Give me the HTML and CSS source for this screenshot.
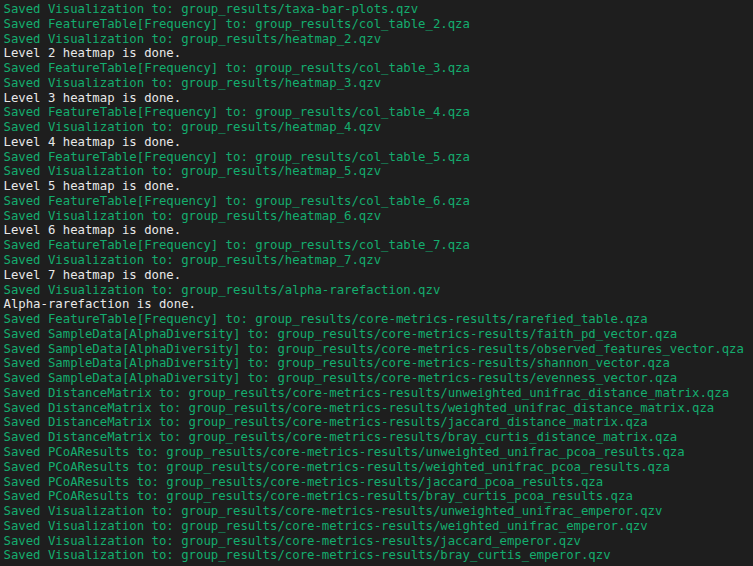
FILE: index.html
```html
<!DOCTYPE html>
<html>
<head>
<meta charset="utf-8">
<link rel="stylesheet" href="styles.css">
</head>
<body>
<div class="term">
<div class="g">Saved Visualization to: group_results/taxa-bar-plots.qzv</div>
<div class="g">Saved FeatureTable[Frequency] to: group_results/col_table_2.qza</div>
<div class="g">Saved Visualization to: group_results/heatmap_2.qzv</div>
<div class="w">Level 2 heatmap is done.</div>
<div class="g">Saved FeatureTable[Frequency] to: group_results/col_table_3.qza</div>
<div class="g">Saved Visualization to: group_results/heatmap_3.qzv</div>
<div class="w">Level 3 heatmap is done.</div>
<div class="g">Saved FeatureTable[Frequency] to: group_results/col_table_4.qza</div>
<div class="g">Saved Visualization to: group_results/heatmap_4.qzv</div>
<div class="w">Level 4 heatmap is done.</div>
<div class="g">Saved FeatureTable[Frequency] to: group_results/col_table_5.qza</div>
<div class="g">Saved Visualization to: group_results/heatmap_5.qzv</div>
<div class="w">Level 5 heatmap is done.</div>
<div class="g">Saved FeatureTable[Frequency] to: group_results/col_table_6.qza</div>
<div class="g">Saved Visualization to: group_results/heatmap_6.qzv</div>
<div class="w">Level 6 heatmap is done.</div>
<div class="g">Saved FeatureTable[Frequency] to: group_results/col_table_7.qza</div>
<div class="g">Saved Visualization to: group_results/heatmap_7.qzv</div>
<div class="w">Level 7 heatmap is done.</div>
<div class="g">Saved Visualization to: group_results/alpha-rarefaction.qzv</div>
<div class="w">Alpha-rarefaction is done.</div>
<div class="g">Saved FeatureTable[Frequency] to: group_results/core-metrics-results/rarefied_table.qza</div>
<div class="g">Saved SampleData[AlphaDiversity] to: group_results/core-metrics-results/faith_pd_vector.qza</div>
<div class="g">Saved SampleData[AlphaDiversity] to: group_results/core-metrics-results/observed_features_vector.qza</div>
<div class="g">Saved SampleData[AlphaDiversity] to: group_results/core-metrics-results/shannon_vector.qza</div>
<div class="g">Saved SampleData[AlphaDiversity] to: group_results/core-metrics-results/evenness_vector.qza</div>
<div class="g">Saved DistanceMatrix to: group_results/core-metrics-results/unweighted_unifrac_distance_matrix.qza</div>
<div class="g">Saved DistanceMatrix to: group_results/core-metrics-results/weighted_unifrac_distance_matrix.qza</div>
<div class="g">Saved DistanceMatrix to: group_results/core-metrics-results/jaccard_distance_matrix.qza</div>
<div class="g">Saved DistanceMatrix to: group_results/core-metrics-results/bray_curtis_distance_matrix.qza</div>
<div class="g">Saved PCoAResults to: group_results/core-metrics-results/unweighted_unifrac_pcoa_results.qza</div>
<div class="g">Saved PCoAResults to: group_results/core-metrics-results/weighted_unifrac_pcoa_results.qza</div>
<div class="g">Saved PCoAResults to: group_results/core-metrics-results/jaccard_pcoa_results.qza</div>
<div class="g">Saved PCoAResults to: group_results/core-metrics-results/bray_curtis_pcoa_results.qza</div>
<div class="g">Saved Visualization to: group_results/core-metrics-results/unweighted_unifrac_emperor.qzv</div>
<div class="g">Saved Visualization to: group_results/core-metrics-results/weighted_unifrac_emperor.qzv</div>
<div class="g">Saved Visualization to: group_results/core-metrics-results/jaccard_emperor.qzv</div>
<div class="g">Saved Visualization to: group_results/core-metrics-results/bray_curtis_emperor.qzv</div>
</div>
</body>
</html>
```
FILE: styles.css
```css
html, body {
  margin: 0;
  padding: 0;
  background: #1e1e1e;
  height: 100%;
  overflow: hidden;
}
.term {
  padding: 2px 0 0 3.5px;
  font-family: "DejaVu Sans Mono", monospace;
  font-size: 12.3px;
  line-height: 14.77px;
}
.g, .w {
  white-space: pre;
}
.g { color: #14ad6e; }
.w { color: #e8e8e8; }
```
